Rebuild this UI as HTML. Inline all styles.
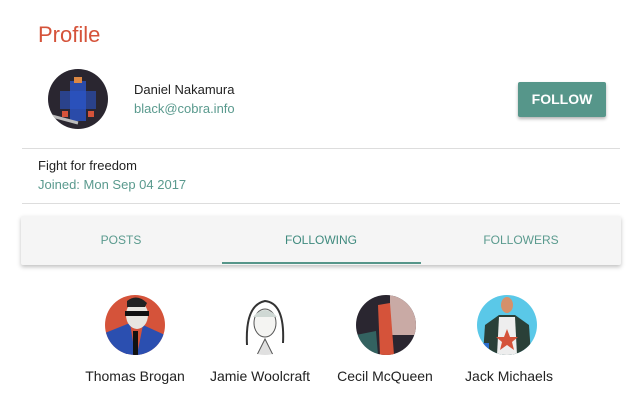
<!DOCTYPE html>
<html><head><style>
body{margin:0;width:642px;height:416px;background:#fff;font-family:"Liberation Sans",sans-serif;position:relative;overflow:hidden}
.a{position:absolute}
.t{white-space:nowrap}
.av{position:absolute;border-radius:50%;overflow:hidden}
.nm{position:absolute;font-size:14px;color:#222;width:130px;text-align:center;top:368px}
</style></head><body>
<div class="a t" style="left:38px;top:22px;font-size:22px;color:#d5533a">Profile</div>
<div class="av" style="left:48px;top:69px;width:60px;height:60px;background:#2a2630">
<svg width="60" height="60"><rect x="22" y="12" width="16" height="40" fill="#2b55c8" opacity=".8"/><rect x="12" y="22" width="36" height="18" fill="#2b55c8" opacity=".6"/><rect x="26" y="8" width="8" height="6" fill="#d84"/><rect x="14" y="42" width="6" height="6" fill="#d5533a"/><rect x="40" y="42" width="6" height="6" fill="#d5533a"/><path d="M0 46 L30 54" stroke="#bbb" stroke-width="3"/></svg></div>
<div class="a t" style="left:134px;top:82px;font-size:13px;color:#222">Daniel Nakamura</div>
<div class="a t" style="left:134px;top:101px;font-size:13px;color:#5a9a8e">black@cobra.info</div>
<div class="a" style="left:518px;top:82px;width:88px;height:35px;background:#56968a;color:#fff;font-size:14px;font-weight:bold;text-align:center;line-height:35px;box-shadow:0 2px 3px rgba(0,0,0,.3);border-radius:2px">FOLLOW</div>
<div class="a" style="left:22px;top:148px;width:598px;height:1px;background:#ddd"></div>
<div class="a t" style="left:38px;top:158px;font-size:13px;color:#222">Fight for freedom</div>
<div class="a t" style="left:38px;top:177px;font-size:13px;color:#5a9a8e">Joined: Mon Sep 04 2017</div>
<div class="a" style="left:22px;top:203px;width:598px;height:1px;background:#ddd"></div>
<div class="a" style="left:21px;top:216px;width:600px;height:49px;background:#f5f5f5;box-shadow:0 2px 4px rgba(0,0,0,.25);border-radius:2px"></div>
<div class="a t" style="left:21px;top:233px;width:200px;text-align:center;font-size:12px;color:#5a9a8e">POSTS</div>
<div class="a t" style="left:221px;top:233px;width:200px;text-align:center;font-size:12px;color:#3f8a7e">FOLLOWING</div>
<div class="a t" style="left:421px;top:233px;width:200px;text-align:center;font-size:12px;color:#5a9a8e">FOLLOWERS</div>
<div class="a" style="left:222px;top:262px;width:199px;height:2px;background:#56968a"></div>
<div class="av" style="left:105px;top:295px;width:60px;height:60px;background:#d5533a"><svg width="60" height="60"><path d="M0 38 L25 28 L30 60 L0 60Z" fill="#2b4fb0"/><path d="M60 40 L38 30 L32 60 L60 60Z" fill="#2b4fb0"/><ellipse cx="32" cy="20" rx="11" ry="14" fill="#e8e6e0"/><rect x="20" y="16" width="24" height="5" fill="#111"/><path d="M22 6 Q32 -2 42 8 L40 12 L22 12Z" fill="#222"/><rect x="28" y="36" width="5" height="24" fill="#111"/></svg></div>
<div class="av" style="left:235px;top:295px;width:60px;height:60px;background:#fff"><svg width="60" height="60"><path d="M12 50 Q10 10 30 6 Q50 8 48 48" fill="none" stroke="#333" stroke-width="2"/><ellipse cx="30" cy="28" rx="11" ry="14" fill="#f4f4f2" stroke="#555"/><path d="M18 22 Q30 8 42 22" fill="#cfd8d4"/><path d="M22 60 L30 44 L38 60" fill="#e0e0e0" stroke="#555"/></svg></div>
<div class="av" style="left:356px;top:295px;width:60px;height:60px;background:#2a2630"><svg width="60" height="60"><rect x="34" y="0" width="26" height="40" fill="#c9aaa5"/><path d="M22 10 L34 8 L38 60 L24 60Z" fill="#d5533a"/><path d="M0 40 L20 36 L22 60 L0 60Z" fill="#3a8a80" opacity=".6"/></svg></div>
<div class="av" style="left:477px;top:295px;width:60px;height:60px;background:#5ac8e8"><svg width="60" height="60"><path d="M6 60 L8 30 L22 20 L38 20 L52 30 L54 60Z" fill="#2a4038"/><path d="M22 22 L38 22 L40 60 L20 60Z" fill="#eee"/><path d="M30 34 L33 42 L41 42 L35 47 L37 55 L30 50 L23 55 L25 47 L19 42 L27 42Z" fill="#d5533a"/><ellipse cx="30" cy="10" rx="6" ry="8" fill="#d5906a"/><rect x="0" y="48" width="12" height="12" fill="#2b6fd0"/></svg></div>
<div class="nm" style="left:70px">Thomas Brogan</div>
<div class="nm" style="left:195px">Jamie Woolcraft</div>
<div class="nm" style="left:320px">Cecil McQueen</div>
<div class="nm" style="left:444px">Jack Michaels</div>
</body></html>
